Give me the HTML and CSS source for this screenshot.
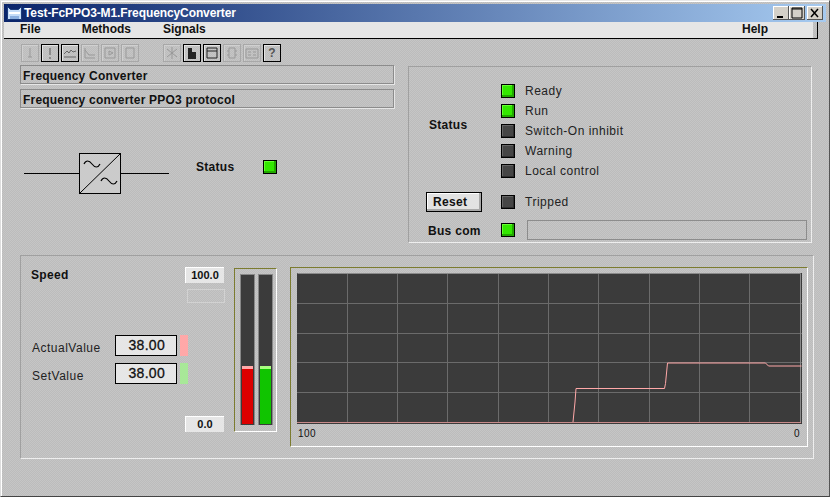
FILE: index.html
```html
<!DOCTYPE html>
<html lang="en">
<head>
  <meta charset="UTF-8">
  <title>Test-FcPPO3-M1.FrequencyConverter</title>
  <link rel="stylesheet" href="styles.css">
</head>
<body>
<div class="window">
  <div class="titlebar">
    <svg class="appicon" width="15" height="15" viewBox="0 0 15 15">
      <path d="M.5 .5l3 3h8l3-3v13H.5z" fill="#c4dcf8" stroke="#1a3a7a"/>
      <path d="M2 6h11v2H2z" fill="#fff"/>
      <path d="M3 10h9v3H3z" fill="#8cb0e0"/>
    </svg>
    <span class="title">Test-FcPPO3-M1.FrequencyConverter</span>
    <div class="winbtns">
      <span class="winbtn"><svg width="16" height="14" viewBox="0 0 16 14"><path d="M4 10h6v2H4z" fill="#000"/></svg></span>
      <span class="winbtn"><svg width="16" height="14" viewBox="0 0 16 14"><path d="M3 2h10v10H3z M3 3h10" fill="none" stroke="#000"/></svg></span>
      <span class="winbtn close"><svg width="16" height="14" viewBox="0 0 16 14"><path d="M4 3l7 8M11 3l-7 8" fill="none" stroke="#000" stroke-width="1.5"/></svg></span>
    </div>
  </div>
  <div class="menubar">
    <div class="menu">
      <span class="m-file">File</span>
      <span class="m-methods">Methods</span>
      <span class="m-signals">Signals</span>
      <span class="m-help">Help</span>
    </div>
  </div>

  <div class="content">
    <div class="toolbar">
      <span class="tool off"><svg width="16" height="16" viewBox="0 0 16 16"><path d="M8 3v9M6 12h4" stroke="#999" fill="none"/></svg></span>
      <span class="tool"><svg width="16" height="16" viewBox="0 0 16 16"><path d="M8 3v7M8 12v2" stroke="#777" stroke-width="1.4" fill="none"/></svg></span>
      <span class="tool"><svg width="16" height="16" viewBox="0 0 16 16"><path d="M2 12h12M2 9l3-3 2 2 2-3 2 2 3-1" stroke="#666" fill="none"/></svg></span>
      <span class="tool off"><svg width="16" height="16" viewBox="0 0 16 16"><path d="M3 3v10h10M3 5l4 5h6" stroke="#999" fill="none"/></svg></span>
      <span class="tool off"><svg width="16" height="16" viewBox="0 0 16 16"><path d="M3 3h10v10H3zM7 6l4 2-4 2z" stroke="#999" fill="none"/></svg></span>
      <span class="tool off"><svg width="16" height="16" viewBox="0 0 16 16"><path d="M4 3h8v10H4z" stroke="#999" fill="none"/></svg></span>
      <span class="tool off sep"><svg width="16" height="16" viewBox="0 0 16 16"><path d="M8 2v12M3 4l10 8M13 4L3 12" stroke="#999" fill="none"/></svg></span>
      <span class="tool"><svg width="16" height="16" viewBox="0 0 16 16"><path d="M4 3h4v4h4v7H4z" fill="#222"/></svg></span>
      <span class="tool"><svg width="16" height="16" viewBox="0 0 16 16"><path d="M3 3h10v10H3zM3 6h10" stroke="#222" fill="none"/></svg></span>
      <span class="tool off"><svg width="16" height="16" viewBox="0 0 16 16"><path d="M5 3h6v10H5zM3 6h2M3 10h2M11 6h2M11 10h2" stroke="#999" fill="none"/></svg></span>
      <span class="tool off"><svg width="16" height="16" viewBox="0 0 16 16"><path d="M2 4h12v9H2zM4 7h3M9 7h3M4 10h3M9 10h3" stroke="#999" fill="none"/></svg></span>
      <span class="tool help">?</span>
    </div>

    <div class="top">
      <div class="left">
        <div class="field">Frequency Converter</div>
        <div class="field">Frequency converter PPO3 protocol</div>
        <div class="drive">
          <svg class="converter" width="145" height="44" viewBox="0 0 145 44">
            <path d="M0 21.500h55M97 21.500h48" stroke="#000" fill="none"/>
            <rect x="55.500" y="1.500" width="41" height="40" fill="#cbcbcb" stroke="#000"/>
            <path d="M56 41L96 2" stroke="#000" fill="none"/>
            <path d="M60 12c2-4 5-4 8 0s6 4 8 0" stroke="#000" stroke-width="1.2" fill="none"/>
            <path d="M77 29c2-4 5-4 8 0s6 4 8 0" stroke="#000" stroke-width="1.2" fill="none"/>
          </svg>
          <span class="bold drive-label">Status</span>
          <span class="led on"></span>
        </div>
      </div>

      <div class="status">
        <span class="bold status-label">Status</span>
        <span class="led on"></span><span class="txt">Ready</span>
        <span class="led on"></span><span class="txt">Run</span>
        <span class="led"></span><span class="txt">Switch-On inhibit</span>
        <span class="led"></span><span class="txt">Warning</span>
        <span class="led"></span><span class="txt">Local control</span>
        <span class="reset row-trip">Reset</span>
        <span class="led row-trip"></span><span class="txt row-trip">Tripped</span>
        <span class="bold bus-label row-bus">Bus com</span>
        <span class="led on row-bus"></span><span class="busfield row-bus"></span>
      </div>
    </div>

    <div class="bottom">
      <div class="speed">
        <div class="speed-head">
          <span class="bold speed-title">Speed</span>
          <span class="scale">100.0</span>
        </div>
        <span class="emptybox"></span>
        <div class="valrow first">
          <span class="txt vlabel">ActualValue</span>
          <span class="value">38.00</span>
          <span class="swatch pink"></span>
        </div>
        <div class="valrow">
          <span class="txt vlabel">SetValue</span>
          <span class="value">38.00</span>
          <span class="swatch mint"></span>
        </div>
        <span class="scale low">0.0</span>
      </div>

      <div class="bars">
        <div class="bar"><div class="fill red" style="height:58px"></div></div>
        <div class="bar"><div class="fill green" style="height:58px"></div></div>
      </div>

      <div class="chart">
        <svg class="plot" width="505" height="151" viewBox="0 0 505 151">
          <rect width="505" height="151" fill="#3b3b3b"/>
          <path d="M50.500 0v150M100.500 0v150M150.500 0v150M201.500 0v150M251.500 0v150M301.500 0v150M352.500 0v150M402.500 0v150M452.500 0v150M0 30.500h505M0 60.500h505M0 89.500h505M0 119.500h505" stroke="#6b6b6b" fill="none"/>
          <path d="M.5 .5H503.500V149.500" stroke="#8a8a8a" fill="none"/>
          <path d="M0 149.500h504" stroke="#c88a8a" fill="none"/>
          <path d="M276 149l2-20 1-13.500h88.500l1-5 2-20.500h98l3 3h33" stroke="#ffa8a8" fill="none"/>
        </svg>
        <div class="axis"><span>100</span><span>0</span></div>
      </div>
    </div>
  </div>
</div>
</body>
</html>
```

FILE: styles.css
```css
* {
  box-sizing: border-box;
}
body {
  margin: 0;
  font-family: "Liberation Sans", Arial, sans-serif;
  font-size: 12px;
  color: #111;
}
.window {
  width: 830px;
  height: 497px;
  padding: 3px 2px 2px 3px;
  border-style: solid;
  border-width: 1px;
  border-color: #e8e8e8 #555 #444 #ddd;
  background-color: #c2c2c2;
  background-image: repeating-conic-gradient(#bcbcbc 0 25%, #c6c6c6 0 50%);
  background-size: 2px 2px;
  box-shadow: inset 1px 1px 0 #fff;
}

/* title and menu */
.titlebar {
  display: flex;
  align-items: center;
  height: 18px;
  padding: 0 3px;
  margin-right: 1px;
  background: linear-gradient(90deg, #0a246a, #a6caf0);
}
.appicon {
  flex: none;
}
.title {
  margin-left: 2px;
  color: #fff;
  font-weight: bold;
  letter-spacing: -0.1px;
}
.winbtns {
  display: flex;
  margin-left: auto;
}
.winbtn {
  display: block;
  width: 16px;
  height: 14px;
  background: #d4d0c8;
  box-shadow: inset -1px -1px 0 #555, inset 1px 1px 0 #fff;
}
.winbtn.close {
  margin-left: 2px;
}
.menubar {
  height: 17px;
  padding-right: 9px;
}
.menu {
  height: 17px;
  border-right: 1px solid #000;
  border-bottom: 1px solid #000;
  font-weight: bold;
  line-height: 14px;
  display: flex;
  background: linear-gradient(#e6e6e6, #e6e6e6) 0 0 / 809px 16px no-repeat;
}
.m-file { margin-left: 16px; }
.m-methods { margin-left: 41px; }
.m-signals { margin-left: 32px; }
.m-help { margin-left: auto; margin-right: 49px; }

/* page body */
.content {
  padding: 5px 0 0 16px;
}
.toolbar {
  display: flex;
  gap: 2px;
  height: 18px;
  margin-left: 1px;
}
.tool {
  display: block;
  width: 18px;
  height: 18px;
  border: 1px solid #000;
  box-shadow: inset 1px 1px 0 #e4e4e4;
  text-align: center;
}
.tool.off {
  border-color: #a8a8a8;
  box-shadow: inset 1px 1px 0 #d0d0d0;
}
.tool.sep {
  margin-left: 22px;
}
.tool.help {
  font-weight: bold;
  color: #555;
  line-height: 16px;
}
.top {
  display: flex;
  margin-top: 4px;
}
.left {
  width: 374px;
  margin-top: -1px;
}
.field {
  height: 19px;
  margin-bottom: 5px;
  padding-left: 2px;
  border: 1px solid #8c8c8c;
  box-shadow: 1px 1px 0 #e6e6e6;
  font-weight: bold;
  line-height: 20px;
  letter-spacing: 0.2px;
}
.drive {
  display: flex;
  align-items: flex-start;
  margin: 44px 0 0 4px;
}
.drive-label {
  margin: 8px 0 0 27px;
}
.drive .led {
  margin: 8px 0 0 29px;
}
.bold {
  font-weight: bold;
  letter-spacing: 0.3px;
}
.led {
  display: block;
  width: 14px;
  height: 14px;
  border: 1px solid #000;
  background: #454545;
  box-shadow: inset -1px -1px 0 #2e2e2e, inset 1px 1px 0 #666;
}
.led.on {
  background: #33e800;
  box-shadow: inset -2px -2px 0 #22a800, inset 1px 1px 0 #66ff33;
}
.txt {
  color: #222;
  letter-spacing: 0.5px;
}

/* status panel */
.status {
  display: grid;
  grid-template-columns: 65px 14px 1fr;
  grid-template-rows: repeat(5, 20px) 11px 20px 8px 20px;
  column-gap: 10px;
  align-items: center;
  width: 404px;
  height: 177px;
  margin-left: 14px;
  padding: 14px 4px 0 17px;
  border: 1px solid;
  border-color: #a0a0a0 #eee #eee #a0a0a0;
}
.status .led { grid-column: 2; }
.status .txt { grid-column: 3; }
.status-label {
  grid-column: 1;
  grid-row: 1 / 6;
  margin: 0 0 13px 3px;
}
.status .row-trip { grid-row: 7; }
.status .row-bus { grid-row: 9; }
.reset {
  grid-column: 1;
  width: 56px;
  height: 20px;
  border: 1px solid #000;
  background: #e2e2e2;
  box-shadow: inset -2px -2px 0 #a8a8a8, inset 1px 1px 0 #fff;
  font-weight: bold;
  line-height: 18px;
  padding-left: 6px;
  letter-spacing: 0.3px;
}
.bus-label {
  grid-column: 1;
  margin-left: 2px;
  padding-top: 2px;
}
.busfield {
  grid-column: 3;
  height: 20px;
  margin-left: 2px;
  border: 1px solid #8c8c8c;
}

/* speed panel */
.bottom {
  display: flex;
  align-items: flex-start;
  width: 794px;
  height: 204px;
  margin-top: 12px;
  padding: 11px 0 0 10px;
  border: 1px solid;
  border-color: #a0a0a0 #eee #eee #a0a0a0;
}
.speed {
  display: flex;
  flex-direction: column;
  width: 193px;
  height: 165px;
}
.speed-head {
  display: flex;
  justify-content: space-between;
}
.speed-title {
  padding-top: 1px;
}
.scale {
  display: block;
  width: 39px;
  height: 16px;
  background: #e6e6e6;
  border-top: 1px solid #fff;
  border-left: 1px solid #fff;
  font-weight: bold;
  font-size: 11px;
  line-height: 15px;
  text-align: center;
}
.scale.low {
  margin: 32px 0 0 auto;
}
.emptybox {
  display: block;
  width: 38px;
  height: 14px;
  margin: 6px -1px 0 auto;
  border: 1px solid #d2d2d2;
}
.valrow {
  display: flex;
  align-items: center;
  height: 21px;
  margin-top: 7px;
}
.valrow.first {
  margin-top: 32px;
}
.vlabel {
  width: 84px;
  margin-left: 1px;
  margin-right: -1px;
  padding-top: 4px;
  flex: none;
}
.value {
  display: block;
  width: 62px;
  height: 21px;
  border: 1px solid #000;
  background: #e6e6e6;
  font-size: 14px;
  line-height: 19px;
  text-align: right;
  padding-right: 11px;
  letter-spacing: 0.3px;
  -webkit-text-stroke: 0.3px #111;
}
.swatch {
  display: block;
  width: 8px;
  height: 21px;
  margin-left: 3px;
}
.pink { background: #ffa8a8; }
.mint { background: #a8e898; }
.bars {
  display: flex;
  gap: 3px;
  width: 43px;
  height: 164px;
  margin: 1px 0 0 10px;
  padding: 5px 0 0 5px;
  border: 1px solid;
  border-color: #7c7c30 #fff #fff #7c7c30;
}
.bar {
  display: flex;
  align-items: flex-end;
  width: 15px;
  height: 151px;
  padding: 0 1px 1px;
  background: #3b3b3b;
  border: 1px solid #888;
  border-bottom: 0;
}
.fill {
  width: 100%;
  border-top: 3px solid;
}
.red { background: #dc0000; border-color: #ffa8a8; }
.green { background: #10c400; border-color: #a8ff80; }
.chart {
  width: 518px;
  height: 180px;
  margin-left: 13px;
  padding: 5px 0 0 6px;
  border: 1px solid;
  border-color: #7c7c30 #fff #fff #7c7c30;
}
.plot {
  display: block;
}
.axis {
  display: flex;
  justify-content: space-between;
  width: 505px;
  padding: 4px 2px 0 1px;
  font-size: 10px;
  letter-spacing: 0.5px;
}
```
